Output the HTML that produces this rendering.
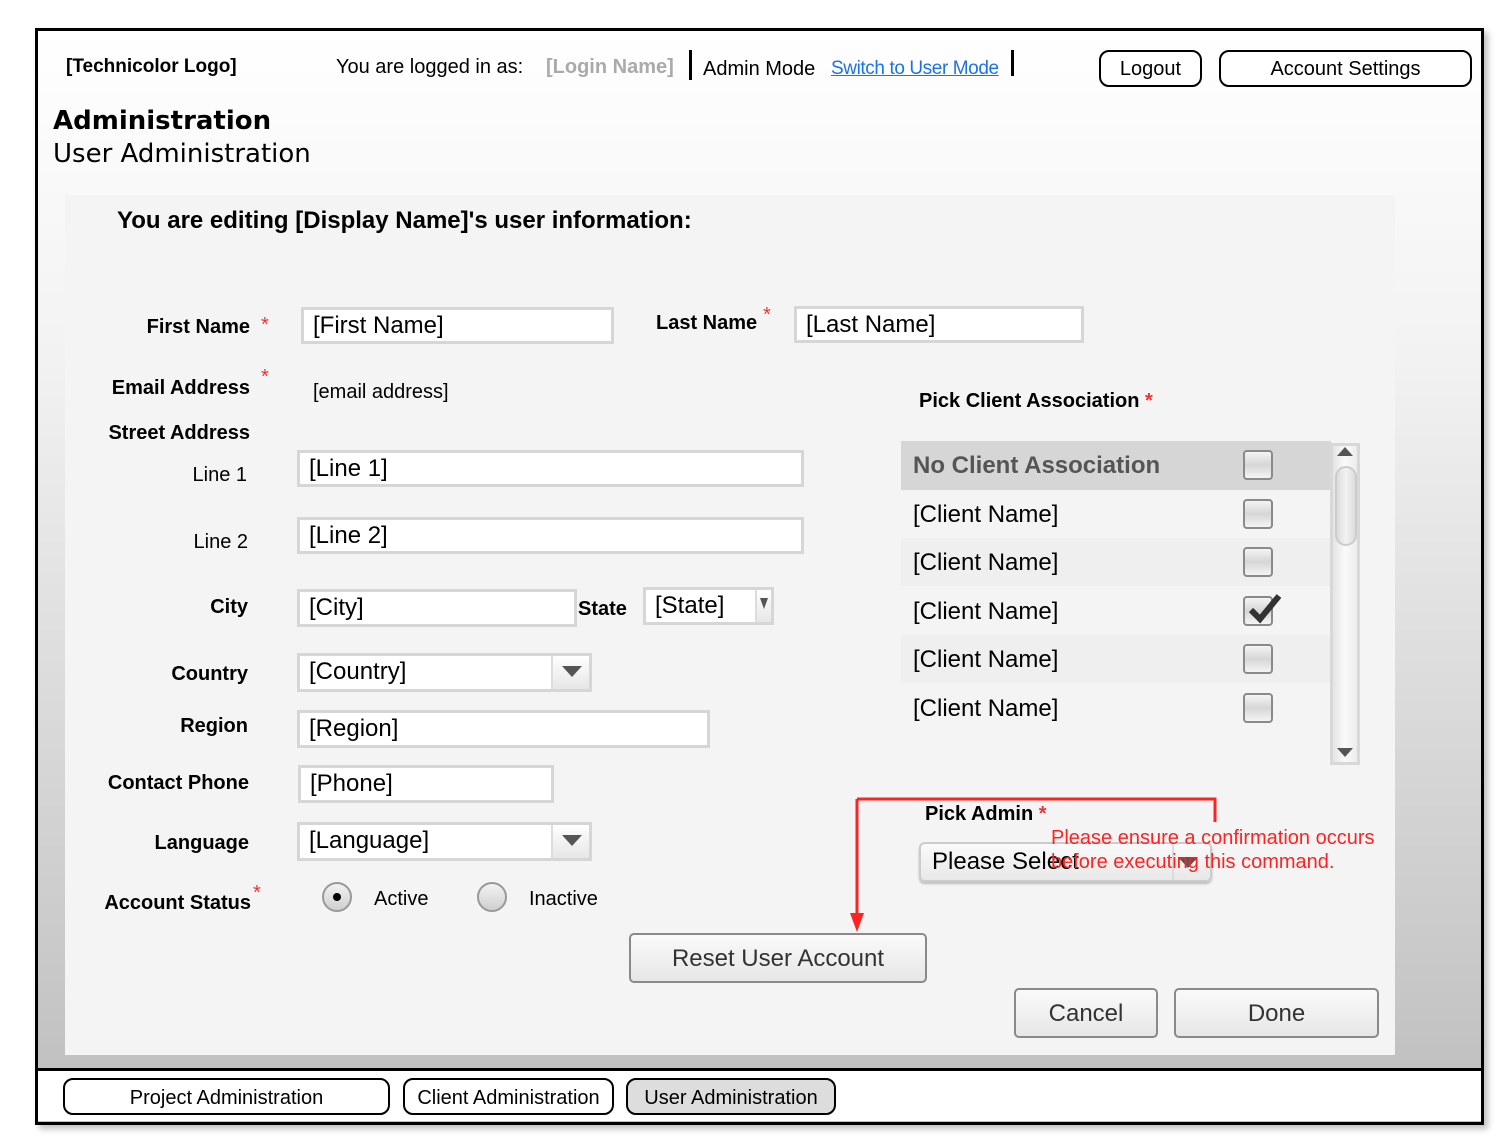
<!DOCTYPE html>
<html><head><meta charset="utf-8"><style>
*{margin:0;padding:0;box-sizing:border-box}
body{width:1506px;height:1144px;background:#fff;position:relative;overflow:hidden;font-family:"Liberation Sans",Arial,sans-serif;color:#000}
.a{position:absolute;white-space:nowrap}
#frame{position:absolute;left:35px;top:28px;width:1449px;height:1097px;border:3px solid #000;background:linear-gradient(#fff 0%,#f2f2f2 30%,#c9c9c9 85%,#bdbdbd 100%);box-shadow:4px 4px 6px rgba(0,0,0,.25)}
#panel{position:absolute;left:65px;top:195px;width:1330px;height:860px;background:#f4f4f4}
#nav{position:absolute;left:38px;top:1068px;width:1443px;height:53px;background:#fff;border-top:3px solid #000}
.lbl{font-weight:bold;font-size:20px;text-align:right}
.req{color:#e33;font-size:20px}
.in{position:absolute;background:#fff;border:3px solid #d6d6d6;font-size:24px;padding-left:9px;line-height:32px;white-space:nowrap}
.dd{position:absolute;right:0;top:0;bottom:0;width:38px;background:linear-gradient(#fff,#e6e6e6);border-left:2px solid #ddd}
.dd:after{content:"";position:absolute;left:9px;top:10px;border-left:10px solid transparent;border-right:10px solid transparent;border-top:11px solid #555}
.dds{position:absolute;right:0;top:0;bottom:0;width:16px;background:linear-gradient(#fff,#e6e6e6);border-left:2px solid #ddd}
.dds:after{content:"";position:absolute;left:3px;top:8px;border-left:4px solid transparent;border-right:4px solid transparent;border-top:11px solid #555}
.btn{position:absolute;border:2px solid #000;border-radius:10px;background:#fff;font-size:20px;text-align:center}
.gbtn{position:absolute;border:2px solid #8a8a8a;border-radius:5px;background:linear-gradient(#fafafa,#e6e6e6);font-size:24px;color:#333;text-align:center}
.row{position:absolute;left:901px;width:430px;height:48px;font-size:24px;padding-left:12px;line-height:50px}
.cb{position:absolute;left:342px;top:9px;width:30px;height:30px;border:2px solid #8a8a8a;border-radius:4px;background:linear-gradient(#f4f4f4,#d6d6d6,#f4f4f4)}
.radio{position:absolute;width:30px;height:30px;border-radius:50%;border:2px solid #999;background:linear-gradient(#f2f2f2,#d0d0d0)}
</style></head><body>
<div id="frame"></div>
<div id="panel"></div>
<div id="nav"></div>

<div class="a" style="left:66px;top:56px;font-size:19px;font-weight:bold">[Technicolor Logo]</div>
<div class="a" style="left:336px;top:56px;font-size:20px">You are logged in as:</div>
<div class="a" style="left:546px;top:56px;font-size:20px;color:#aaa;font-weight:bold">[Login Name]</div>
<div class="a" style="left:689px;top:50px;width:3px;height:30px;background:#000"></div>
<div class="a" style="left:703px;top:58px;font-size:20px">Admin Mode</div>
<div class="a" style="left:831px;top:58px;font-size:19px;color:#1a73e8;text-decoration:underline;letter-spacing:-0.4px">Switch to User Mode</div>
<div class="a" style="left:1011px;top:50px;width:3px;height:26px;background:#000"></div>
<div class="btn" style="left:1099px;top:50px;width:103px;height:37px;line-height:35px">Logout</div>
<div class="btn" style="left:1219px;top:50px;width:253px;height:37px;line-height:35px">Account Settings</div>

<div class="a" style="left:53px;top:106px;font-family:'DejaVu Sans',sans-serif;font-weight:bold;font-size:26px">Administration</div>
<div class="a" style="left:53px;top:139px;font-family:'DejaVu Sans',sans-serif;font-size:26px">User Administration</div>
<div class="a" style="left:117px;top:207px;font-size:24px;font-weight:bold">You are editing [Display Name]'s user information:</div>

<div class="a lbl" style="left:60px;width:190px;top:316px">First Name</div><div class="a req" style="left:261px;top:314px">*</div>
<div class="in" style="left:301px;top:307px;width:313px;height:37px">[First Name]</div>
<div class="a lbl" style="left:656px;top:312px">Last Name</div><div class="a req" style="left:763px;top:304px">*</div>
<div class="in" style="left:794px;top:306px;width:290px;height:37px">[Last Name]</div>

<div class="a lbl" style="left:60px;width:190px;top:377px">Email Address</div><div class="a req" style="left:261px;top:366px">*</div>
<div class="a" style="left:313px;top:381px;font-size:20px">[email address]</div>
<div class="a lbl" style="left:60px;width:190px;top:422px">Street Address</div>
<div class="a" style="left:60px;width:187px;top:464px;font-size:20px;text-align:right">Line 1</div>
<div class="in" style="left:297px;top:450px;width:507px;height:37px">[Line 1]</div>
<div class="a" style="left:60px;width:188px;top:531px;font-size:20px;text-align:right">Line 2</div>
<div class="in" style="left:297px;top:517px;width:507px;height:37px">[Line 2]</div>

<div class="a lbl" style="left:60px;width:188px;top:596px">City</div>
<div class="in" style="left:297px;top:589px;width:280px;height:38px">[City]</div>
<div class="a lbl" style="left:578px;top:598px">State</div>
<div class="in" style="left:643px;top:587px;width:131px;height:38px">[State]<div class="dds"></div></div>

<div class="a lbl" style="left:60px;width:188px;top:663px">Country</div>
<div class="in" style="left:297px;top:653px;width:295px;height:39px">[Country]<div class="dd"></div></div>
<div class="a lbl" style="left:60px;width:188px;top:715px">Region</div>
<div class="in" style="left:297px;top:710px;width:413px;height:38px">[Region]</div>
<div class="a lbl" style="left:60px;width:189px;top:772px">Contact Phone</div>
<div class="in" style="left:298px;top:765px;width:256px;height:38px">[Phone]</div>
<div class="a lbl" style="left:60px;width:189px;top:832px">Language</div>
<div class="in" style="left:297px;top:822px;width:295px;height:39px">[Language]<div class="dd"></div></div>

<div class="a lbl" style="left:60px;width:191px;top:892px">Account Status</div><div class="a req" style="left:253px;top:882px">*</div>
<div class="radio" style="left:322px;top:882px"><div style="position:absolute;left:9px;top:9px;width:8px;height:8px;border-radius:50%;background:#000"></div></div>
<div class="a" style="left:374px;top:888px;font-size:20px">Active</div>
<div class="radio" style="left:477px;top:882px"></div>
<div class="a" style="left:529px;top:888px;font-size:20px">Inactive</div>

<div class="a lbl" style="left:919px;top:390px">Pick Client Association <span class="req">*</span></div>
<div class="row" style="top:441px;height:49px;background:#d6d6d6;color:#555;font-weight:bold">No Client Association<div class="cb"></div></div>
<div class="row" style="top:490px">[Client Name]<div class="cb"></div></div>
<div class="row" style="top:538px;background:#efefef">[Client Name]<div class="cb"></div></div>
<div class="row" style="top:587px">[Client Name]<div class="cb"></div>
<svg class="a" style="left:342px;top:4px" width="42" height="36" viewBox="0 0 42 36"><path d="M8 19 L17 28 L36 5" stroke="#333" stroke-width="6" fill="none"/></svg></div>
<div class="row" style="top:635px;background:#efefef">[Client Name]<div class="cb"></div></div>
<div class="row" style="top:684px">[Client Name]<div class="cb"></div></div>

<div class="a" style="left:1330px;top:443px;width:30px;height:322px;background:#d8d8d8"></div>
<div class="a" style="left:1333px;top:446px;width:24px;height:316px;background:linear-gradient(90deg,#e4e4e4,#fafafa,#ececec)"></div>
<div class="a" style="left:1337px;top:447px;border-left:8px solid transparent;border-right:8px solid transparent;border-bottom:9px solid #555"></div>
<div class="a" style="left:1335px;top:466px;width:22px;height:80px;border:2px solid #ccc;border-radius:11px;background:linear-gradient(90deg,#ddd,#f2f2f2,#ddd)"></div>
<div class="a" style="left:1337px;top:748px;border-left:8px solid transparent;border-right:8px solid transparent;border-top:9px solid #555"></div>

<div class="a lbl" style="left:925px;top:803px">Pick Admin <span class="req">*</span></div>
<div class="a" style="left:919px;top:842px;width:293px;height:40px;border:2px solid #ccc;border-radius:6px;background:linear-gradient(#fafafa,#e8e8e8);box-shadow:0 2px 2px #bbb;font-size:24px;padding-left:11px;line-height:36px">Please Select<div style="position:absolute;right:36px;top:0;bottom:0;border-left:2px solid #ddd"></div><div style="position:absolute;right:12px;top:13px;border-left:10px solid transparent;border-right:10px solid transparent;border-top:11px solid #555"></div></div>
<svg class="a" style="left:0;top:0" width="1506" height="1144"><path d="M857 799 H1215 V822 M857 799 V915" stroke="#f22" stroke-width="3" fill="none"/><path d="M850 913 L864 913 L857 932 Z" fill="#f22"/></svg>
<div class="a" style="left:1051px;top:826px;font-size:20px;color:#f22;line-height:24px">Please ensure a confirmation occurs<br>before executing this command.</div>

<div class="gbtn" style="left:629px;top:933px;width:298px;height:50px;line-height:48px">Reset User Account</div>
<div class="gbtn" style="left:1014px;top:988px;width:144px;height:50px;line-height:48px">Cancel</div>
<div class="gbtn" style="left:1174px;top:988px;width:205px;height:50px;line-height:48px">Done</div>

<div class="btn" style="left:63px;top:1078px;width:327px;height:37px;line-height:36px">Project Administration</div>
<div class="btn" style="left:403px;top:1078px;width:211px;height:37px;line-height:36px">Client Administration</div>
<div class="btn" style="left:626px;top:1078px;width:210px;height:37px;line-height:36px;background:#ddd">User Administration</div>
</body></html>
